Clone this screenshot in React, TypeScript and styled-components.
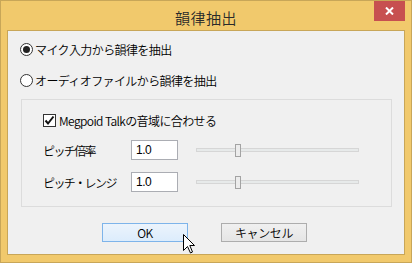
import React from 'react';
import styled, { createGlobalStyle } from 'styled-components';

const GlobalStyle = createGlobalStyle`
  * { box-sizing: border-box; }
  html, body { margin: 0; padding: 0; background: #f0c86b; }
  body {
    font-family: 'Noto Sans CJK JP', 'Noto Sans', sans-serif;
    font-size: 12px;
    font-weight: 350;
    color: #000;
  }
`;

const Window = styled.div`
  position: relative;
  width: 412px;
  height: 263px;
  background: #f1c96c;
  border: 1px solid #c8a658;
  padding: 0 6px 7px 6px;
  display: flex;
  flex-direction: column;
`;

const TitleBar = styled.div`
  height: 29px;
  display: flex;
  align-items: center;
  justify-content: center;
  padding-top: 3px;
`;

const Title = styled.div`
  font-size: 15px;
  line-height: 15px;
  color: #2a2a2a;
  letter-spacing: 0.5px;
`;

const CloseButton = styled.div`
  position: absolute;
  top: 0;
  right: 6px;
  width: 31px;
  height: 20px;
  background: #c75050;
  display: flex;
  align-items: center;
  justify-content: center;
`;

const Client = styled.div`
  flex: 1;
  background: #f0f0f0;
  border: 1px solid #c8a658;
  padding: 12px 12px 0 12px;
  display: flex;
  flex-direction: column;
`;

const OptionRow = styled.label<{ $gap?: number }>`
  display: flex;
  align-items: center;
  height: 13px;
  margin-top: ${(p) => p.$gap ?? 0}px;
  line-height: 13px;
  white-space: nowrap;
`;

const Radio = styled.span<{ $checked?: boolean }>`
  width: 13px;
  height: 13px;
  border-radius: 50%;
  border: 1px solid #333;
  background: #fff;
  display: flex;
  align-items: center;
  justify-content: center;
  margin-right: 2px;
  flex: none;

  &::after {
    content: '';
    width: 7px;
    height: 7px;
    border-radius: 50%;
    background: ${(p) => (p.$checked ? '#222' : 'transparent')};
  }
`;

const Check = styled.span`
  width: 13px;
  height: 13px;
  border: 1px solid #333;
  background: #fff;
  display: flex;
  align-items: center;
  justify-content: center;
  margin-right: 3px;
  flex: none;
`;

const Label = styled.span`
  letter-spacing: -0.6px;
`;

const GroupBox = styled.div`
  margin: 12px 0 0 1px;
  height: 108px;
  border: 1px solid #dcdcdc;
  padding: 14px 0 0 21px;
  display: flex;
  flex-direction: column;
`;

const ParamRow = styled.div<{ $top: number }>`
  display: flex;
  align-items: center;
  height: 20px;
  margin-top: ${(p) => p.$top}px;
`;

const ParamLabel = styled.span`
  width: 88px;
  letter-spacing: -1.6px;
  white-space: nowrap;
`;

const TextBox = styled.div`
  width: 47px;
  height: 20px;
  border: 1px solid #abadb3;
  background: #fff;
  padding: 0 0 0 4px;
  display: flex;
  align-items: center;
  font-family: 'Liberation Sans', Arial, sans-serif;
  font-weight: 400;
  font-size: 12px;
  letter-spacing: -0.5px;
`;

const Slider = styled.div`
  position: relative;
  width: 163px;
  height: 13px;
  margin-left: 18px;
  display: flex;
  align-items: center;
`;

const Track = styled.div`
  width: 100%;
  height: 4px;
  background: #e7eaea;
  border: 1px solid #d6d6d6;
`;

const Thumb = styled.div`
  position: absolute;
  top: 0;
  width: 6px;
  height: 13px;
  background: #ececec;
  border: 1px solid #a3a3a3;
`;

const ButtonRow = styled.div`
  display: flex;
  gap: 33px;
  margin: 16px 0 0 82px;
`;

const Button = styled.div<{ $focused?: boolean }>`
  width: 86px;
  height: 19px;
  display: flex;
  align-items: center;
  justify-content: center;
  border: 1px solid ${(p) => (p.$focused ? '#7eb4ea' : '#adadad')};
  background: ${(p) =>
    p.$focused
      ? 'linear-gradient(#ecf4fc, #dcecfc)'
      : 'linear-gradient(#f0f0f0, #e5e5e5)'};
  font-size: 12px;
  letter-spacing: -0.4px;
  line-height: 12px;
`;

const Cursor = styled.svg`
  position: absolute;
  left: 182px;
  top: 233px;
`;

const sliders = [0.25, 0.25];

export default function App() {
  return (
    <>
      <GlobalStyle />
      <Window>
        <TitleBar>
          <Title>韻律抽出</Title>
        </TitleBar>
        <CloseButton>
          <svg width="9" height="8" viewBox="0 0 9 8">
            <path d="M1 0.5 L8 7.5 M8 0.5 L1 7.5" stroke="#fff" strokeWidth="2" />
          </svg>
        </CloseButton>
        <Client>
          <OptionRow>
            <Radio $checked />
            <Label>マイク入力から韻律を抽出</Label>
          </OptionRow>
          <OptionRow $gap={18}>
            <Radio />
            <Label>オーディオファイルから韻律を抽出</Label>
          </OptionRow>
          <GroupBox>
            <OptionRow>
              <Check>
                <svg width="11" height="11" viewBox="0 0 11 11">
                  <path d="M1.5 5.5 L4 8.5 L9.5 1.5" stroke="#111" strokeWidth="2" fill="none" />
                </svg>
              </Check>
              <Label>Megpoid Talkの音域に合わせる</Label>
            </OptionRow>
            <ParamRow $top={13}>
              <ParamLabel>ピッチ倍率</ParamLabel>
              <TextBox>1.0</TextBox>
              <Slider>
                <Track />
                <Thumb style={{ left: `${sliders[0] * 157}px` }} />
              </Slider>
            </ParamRow>
            <ParamRow $top={12}>
              <ParamLabel>ピッチ・レンジ</ParamLabel>
              <TextBox>1.0</TextBox>
              <Slider>
                <Track />
                <Thumb style={{ left: `${sliders[1] * 157}px` }} />
              </Slider>
            </ParamRow>
          </GroupBox>
          <ButtonRow>
            <Button $focused>OK</Button>
            <Button>キャンセル</Button>
          </ButtonRow>
        </Client>
        <Cursor width="13" height="20" viewBox="0 0 13 20">
          <path
            d="M0.5 0.5 L0.5 16.5 L4.5 12.5 L7.5 19 L9.5 18 L6.8 11.5 L11.5 11.5 Z"
            fill="#fff"
            stroke="#000"
            strokeWidth="1"
            strokeLinejoin="miter"
          />
        </Cursor>
      </Window>
    </>
  );
}
